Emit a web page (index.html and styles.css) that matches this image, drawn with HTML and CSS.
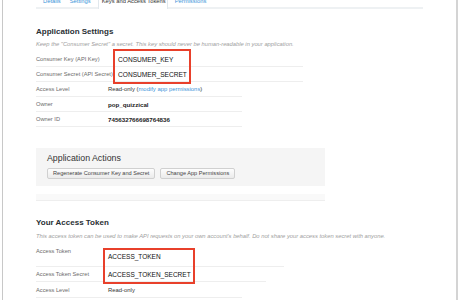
FILE: index.html
```html
<!DOCTYPE html>
<html lang="en">
<head>
    <meta charset="UTF-8">
    <title>Keys and Access Tokens</title>
    <link rel="stylesheet" href="styles.css">
</head>
<body>
    <div class="frame">
        <main class="content">
            <nav class="tabs">
                <a class="tab tab-details" href="#">Details</a>
                <a class="tab tab-settings" href="#">Settings</a>
                <a class="tab active" href="#">Keys and Access Tokens</a>
                <a class="tab tab-permissions" href="#">Permissions</a>
            </nav>

            <section class="settings">
                <h2>Application Settings</h2>
                <p class="note">Keep the "Consumer Secret" a secret. This key should never be human-readable in your application.</p>
                <div class="rows">
                    <div class="row w267"><span class="label">Consumer Key (API Key)</span><span class="value secret">CONSUMER_KEY</span></div>
                    <div class="row w267"><span class="label">Consumer Secret (API Secret)</span><span class="value secret">CONSUMER_SECRET</span></div>
                    <div class="row w206"><span class="label">Access Level</span><span class="value">Read-only (<a href="#">modify app permissions</a>)</span></div>
                    <div class="row w206"><span class="label">Owner</span><span class="value strong">pop_quizzical</span></div>
                    <div class="row w206"><span class="label">Owner ID</span><span class="value strong">745632766698764836</span></div>
                    <!-- highlight drawn over the two key values -->
                    <div class="highlight highlight-consumer"></div>
                </div>
            </section>

            <section class="actions">
                <h3>Application Actions</h3>
                <div class="buttons">
                    <button class="btn">Regenerate Consumer Key and Secret</button>
                    <button class="btn">Change App Permissions</button>
                </div>
            </section>
            <div class="band"></div>

            <section class="settings token">
                <h2>Your Access Token</h2>
                <p class="note">This access token can be used to make API requests on your own account's behalf. Do not share your access token secret with anyone.</p>
                <div class="rows">
                    <div class="row tall w248"><span class="label">Access Token</span><span class="value secret">ACCESS_TOKEN</span></div>
                    <div class="row w230"><span class="label">Access Token Secret</span><span class="value secret">ACCESS_TOKEN_SECRET</span></div>
                    <div class="row last w206"><span class="label">Access Level</span><span class="value">Read-only</span></div>
                    <div class="highlight highlight-token"></div>
                </div>
            </section>
        </main>
    </div>
</body>
</html>
```

FILE: styles.css
```css
body {
    margin: 0;
    padding: 0;
    font-family: "Liberation Sans", Arial, sans-serif;
    background-color: #fff;
    color: #333;
}

.frame {
    margin: 0 2px;
    height: 300px;
    overflow: hidden;
    border-left: 1px solid #c8c8c8;
    border-right: 2px solid #d4d4d4;
    background-color: #fff;
}

.content {
    width: 387px;
    padding-left: 33px;
}

/* tabs */
.tabs {
    display: flex;
    height: 12px;
    margin-top: -5px;
    border-bottom: 2px solid #eef1f3;
    font-size: 5.8px;
    line-height: 12px;
    white-space: nowrap;
}

.tab {
    color: #3b94d9;
    text-decoration: none;
}

.tab-details {
    margin-left: 7px;
}

.tab-settings {
    margin-left: 9px;
}

.tab.active {
    margin-left: 7px;
    padding: 0 1px 0 3px;
    color: #333;
    background-color: #fff;
    border-left: 1px solid #e1e8ed;
    border-right: 1px solid #e1e8ed;
    height: 14px;
}

.tab-permissions {
    margin-left: 7px;
}

/* sections */
.settings h2 {
    margin: 18px 0 0;
    font-size: 8px;
    line-height: 10px;
    font-weight: bold;
    color: #292f33;
}

.note {
    margin: 3px 0 0;
    font-size: 5.8px;
    line-height: 8px;
    font-style: italic;
    color: #a0a0a0;
    white-space: nowrap;
}

.rows {
    position: relative;
    margin-top: 4px;
}

.row {
    display: flex;
    align-items: center;
    height: 14px;
    border-bottom: 1px solid #eeeeee;
    font-size: 5.9px;
    white-space: nowrap;
}

.row.w267 { width: 267px; }
.row.w248 { width: 248px; }
.row.w230 { width: 230px; }
.row.w206 { width: 206px; }

.row.tall {
    height: 22px;
    align-items: flex-start;
}

.row.last {
    height: 15px;
}

.label {
    width: 72px;
    flex-shrink: 0;
    font-size: 5.7px;
    color: #6b6b6b;
}

.row.tall .label {
    line-height: 14px;
}

.value {
    color: #333;
}

.value a {
    color: #3b94d9;
    text-decoration: none;
}

.value.strong {
    font-size: 6.2px;
    color: #222;
    font-weight: bold;
}

.value.secret {
    font-size: 6.5px;
    color: #111;
}

.settings:not(.token) .value.secret {
    padding-left: 10px;
    font-size: 6.6px;
}

.row.tall .value.secret {
    margin-top: 6px;
    line-height: 14px;
}

.highlight {
    position: absolute;
    border: 2px solid #e8402b;
    box-sizing: border-box;
}

.highlight-consumer {
    top: -3px;
    left: 77px;
    width: 78px;
    height: 35px;
}

.highlight-token {
    top: 4px;
    left: 67px;
    width: 92px;
    height: 36px;
}

/* application actions */
.actions {
    margin-top: 21px;
    width: 289px;
    height: 38px;
    padding: 4px 0 0 11px;
    box-sizing: border-box;
    background-color: #f5f5f5;
}

.actions h3 {
    margin: 0;
    font-size: 8.8px;
    line-height: 12px;
    font-weight: normal;
    color: #333;
}

.buttons {
    display: flex;
    gap: 5px;
    margin-top: 4px;
}

.btn {
    height: 11px;
    padding: 0 5px;
    font-family: "Liberation Sans", Arial, sans-serif;
    font-size: 5.6px;
    line-height: 9px;
    color: #444;
    background: linear-gradient(#fdfdfd, #ebebeb);
    border: 1px solid #d0d0d0;
    border-radius: 2px;
}

.band {
    margin-top: 8px;
    width: 289px;
    height: 6px;
    background-color: #f9f9f9;
    border-bottom: 1px solid #eeeeee;
}

.token h2 {
    margin-top: 17px;
}

.token .note {
    margin-top: 4px;
}
```
